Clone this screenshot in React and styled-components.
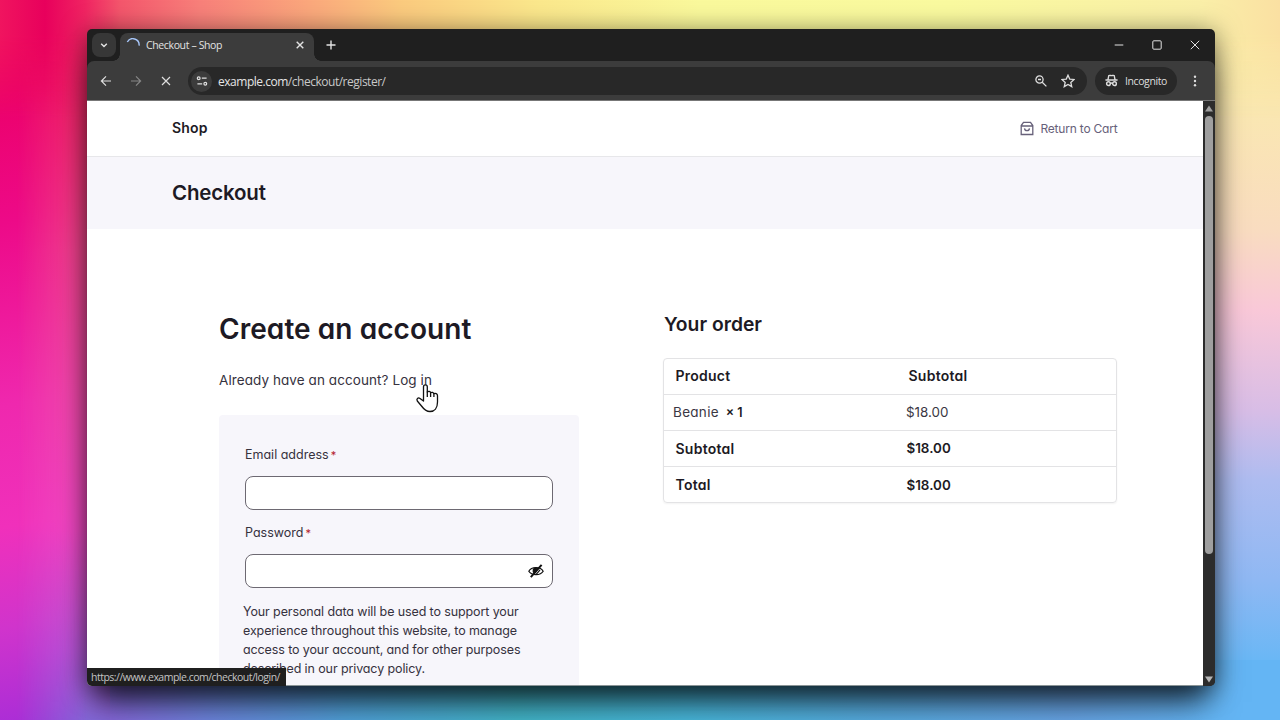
import React from "react";
import styled, { createGlobalStyle, css } from "styled-components";

const GlobalStyle = createGlobalStyle`
  * {
    box-sizing: border-box;
  }

  body {
    margin: 0;
    overflow: hidden;
  }

  h1, h2, p {
    margin: 0;
    font-weight: inherit;
  }
`;

const uiFont = css`
  font-family: "Open Sans", "Noto Sans", sans-serif;
`;

const Desktop = styled.div`
  position: relative;
  display: flex;
  width: 1280px;
  height: 720px;
  padding: 29px 65px 34px 87px;
  overflow: hidden;
  background: linear-gradient(
    #fbeea6 0,
    #fae8b0 100px,
    #f9dcc0 230px,
    #f9c8d8 310px,
    #d8bde6 410px,
    #aebcf0 480px,
    #8fb8f3 580px,
    #6ab7f5 660px,
    #64b5f4 720px
  );
`;

const TopGlow = styled.div`
  position: absolute;
  inset: 0 0 auto 0;
  height: 120px;
  background: linear-gradient(
    90deg,
    #f0145f 0,
    #e8005c 45px,
    #f02462 85px,
    #f4566c 120px,
    #f8807a 200px,
    #fba87c 310px,
    #fbca7e 400px,
    #fbe88c 540px,
    #faf99c 700px,
    #fafa9f 950px,
    #faefa8 1200px,
    #fae0a2 1280px
  );
  mask-image: linear-gradient(#000 28%, transparent);
`;

const LeftGlow = styled.div`
  position: absolute;
  inset: 0 auto 0 0;
  width: 110px;
  background: linear-gradient(
    170deg,
    #ec0a5e 0,
    #ec0068 80px,
    #ed0a88 220px,
    #ef28ae 400px,
    #f030bb 520px,
    #d034cc 620px,
    #a52cd8 730px
  );

  &::after {
    content: "";
    position: absolute;
    inset: 0;
    background: linear-gradient(
      #f01c60 0,
      #f0306c 120px,
      #f04a8c 250px,
      #f04eac 410px,
      #f04cc4 530px,
      #b45cd8 650px,
      #8468d8 720px
    );
    mask-image: linear-gradient(90deg, transparent 15%, #000 80%);
  }
`;

const BottomGlow = styled.div`
  position: absolute;
  inset: auto 0 0 87px;
  height: 60px;
  background: linear-gradient(
    90deg,
    #8c62da 0,
    #6f86e0 120px,
    #52a4dc 260px,
    #44b8cc 430px,
    #4abade 600px,
    #5aaee4 800px,
    #6aa8ea 980px,
    #64b5f4 1120px
  );
`;

const Window = styled.div`
  position: relative;
  display: flex;
  flex-direction: column;
  flex: 1;
  border-radius: 5px;
  overflow: hidden;
  background: #1f1f1f;
`;

const WindowShadow = styled.div`
  position: absolute;
  inset: 29px 65px 34px 87px;
  border-radius: 5px;
  box-shadow: 0 3px 26px rgba(0, 0, 0, 0.5), 0 24px 30px -8px rgba(0, 0, 0, 0.68);
`;

const TabStrip = styled.div`
  ${uiFont}
  display: flex;
  height: 32px;
  padding: 4px 0 0 5px;
  color: #e3e3e3;
`;

const TabSearch = styled.div`
  display: grid;
  place-items: center;
  width: 24px;
  height: 24px;
  border-radius: 8px;
  background: #373737;
`;

const Tab = styled.div`
  position: relative;
  display: flex;
  width: 194px;
  margin-left: 4px;
  padding: 0 8px 4px 6px;
  align-items: center;
  border-radius: 8px 8px 0 0;
  background: #3c3c3c;

  &::before,
  &::after {
    content: "";
    position: absolute;
    bottom: 0;
    width: 7px;
    height: 7px;
  }

  &::before {
    left: -7px;
    background: radial-gradient(circle at 0 0, transparent 6.5px, #3c3c3c 7px);
  }

  &::after {
    right: -7px;
    background: radial-gradient(circle at 100% 0, transparent 6.5px, #3c3c3c 7px);
  }
`;

const TabTitle = styled.span`
  flex: 1;
  padding-left: 6px;
  font-size: 10.5px;
  letter-spacing: -0.37px;
`;

const NewTab = styled.div`
  display: grid;
  place-items: center;
  width: 33px;
  height: 24px;
`;

const WindowControls = styled.div`
  display: flex;
  height: 24px;
  margin-left: auto;
  padding-right: 1px;
  align-items: center;

  svg {
    width: 38px;
  }
`;

const Toolbar = styled.div`
  ${uiFont}
  display: flex;
  flex: none;
  height: 40px;
  align-items: center;
  padding: 1px 0 0 4px;
  border-bottom: 1px solid #777;
  border-radius: 7px 7px 0 0;
  background: #3c3c3c;
  color: #dedede;
`;

const ToolButton = styled.div`
  display: grid;
  place-items: center;
  width: ${({ $width }) => $width || 30}px;
  height: 28px;
  color: ${({ $muted }) => ($muted ? "#868686" : "#dedede")};
`;

const Omnibox = styled.div`
  display: flex;
  width: 899px;
  height: 28px;
  margin-left: 7px;
  padding: 0 12px 0 3px;
  align-items: center;
  border-radius: 14px;
  background: #282828;
`;

const SiteInfo = styled.div`
  display: grid;
  place-items: center;
  width: 21px;
  height: 21px;
  margin-right: 6px;
  border-radius: 50%;
  background: #3c3c3c;
`;

const Url = styled.span`
  flex: 1;
  color: #c9c9c9;
  font-size: 12px;
  letter-spacing: -0.48px;

  b {
    color: #e6e6e6;
    font-weight: 400;
  }
`;

const Incognito = styled.div`
  display: flex;
  width: 82px;
  height: 28px;
  margin-left: 8px;
  padding: 0 0 1px 10px;
  gap: 7px;
  align-items: center;
  border-radius: 14px;
  background: #282828;
  font-size: 10.5px;
  font-weight: 500;
  letter-spacing: -0.4px;
`;

const Viewport = styled.div`
  display: flex;
  flex: 1;
  min-height: 0;
`;

const Page = styled.div`
  flex: 1;
  overflow: hidden;
  border-bottom: 1px solid #8a9496;
  background: #fff;
  color: #1d1a24;
  font-family: Inter, sans-serif;
  font-feature-settings: "cv11";
`;

const Scrollbar = styled.div`
  display: flex;
  flex-direction: column;
  width: 12px;
  align-items: center;
  justify-content: space-between;
  padding: 4px 0 3px;
  background: #2c2c2c;
`;

const Thumb = styled.div`
  width: 8px;
  height: 438px;
  margin: 4px 0 auto;
  border-radius: 4px;
  background: #9f9f9f;
`;

const SiteHeader = styled.header`
  display: flex;
  height: 56px;
  padding: 0 85.5px 0 85px;
  align-items: center;
  justify-content: space-between;
  border-bottom: 1px solid #e7e7ea;
`;

const Brand = styled.span`
  padding-bottom: 2px;
  font-size: 14px;
  font-weight: 600;
  letter-spacing: 0.2px;
`;

const CartLink = styled.a`
  display: flex;
  align-items: center;
  gap: 6px;
  color: #67617a;
  font-size: 12px;
  letter-spacing: -0.2px;
`;

const TitleBand = styled.div`
  height: 72px;
  padding-left: 85px;
  background: #f7f6fb;
  font-size: 20.5px;
  font-weight: 600;
  letter-spacing: -0.18px;
  line-height: 71px;
`;

const Columns = styled.main`
  display: grid;
  grid-template-columns: 360px 454px;
  column-gap: 84px;
  padding: 81px 0 0 132px;
`;

const Heading = styled.h1`
  font-size: 28px;
  font-weight: 600;
  letter-spacing: 0.06px;
  line-height: 38px;
`;

const LoginHint = styled.p`
  margin-top: 22px;
  font-size: 13.5px;
  letter-spacing: 0.08px;
  line-height: 20px;
  color: #36323e;
`;

const Form = styled.div`
  height: 300px;
  margin-top: 25px;
  padding: 30px 26px 0;
  border-radius: 4px;
  background: #f7f6fb;
`;

const Label = styled.div`
  height: 20px;
  line-height: 20px;
  font-size: 12.5px;
  color: #36323e;

  i {
    margin-left: 2px;
    color: #b3202a;
    font-size: 11px;
    font-style: normal;
  }
`;

const Field = styled.div`
  display: flex;
  height: 34px;
  margin: 11px 0 12.5px;
  padding-right: 8px;
  align-items: center;
  justify-content: flex-end;
  border: 1px solid #6d6972;
  border-radius: 8px;
  background: #fff;
`;

const Privacy = styled.p`
  margin: 14px -10px 0 -2px;
  font-size: 12.5px;
  letter-spacing: -0.11px;
  line-height: 19px;
  color: #36323e;
`;

const OrderTitle = styled.h2`
  padding: 1px 0 0 1px;
  font-size: 19.3px;
  font-weight: 600;
  line-height: 26px;
`;

const OrderTable = styled.div`
  margin-top: 21px;
  border: 1px solid #e3e3e5;
  border-radius: 4px;
  box-shadow: 0 1px 2px rgba(0, 0, 0, 0.05);
`;

const OrderRow = styled.div`
  display: grid;
  grid-template-columns: 233px 1fr;
  height: 36px;
  padding-left: ${({ $item }) => ($item ? 9 : 11.5)}px;
  line-height: 35px;
  font-size: ${({ $item }) => ($item ? 13.5 : 14)}px;
  font-weight: ${({ $item }) => ($item ? 400 : 600)};
  letter-spacing: ${({ $item }) => ($item ? 0 : 0.25)}px;
  color: ${({ $item }) => ($item ? "#3a3743" : "#1d1a24")};

  &:first-child {
    height: 35px;
    line-height: 34px;
  }

  &:last-child {
    line-height: 36px;
  }

  & + & {
    border-top: 1px solid #e3e3e5;
  }
`;

const ItemName = styled.span`
  letter-spacing: 0.3px;
`;

const Amount = styled.span`
  margin-left: ${({ $shift }) => $shift || 0}px;
  font-size: 13.4px;
  letter-spacing: 0;
`;

const Quantity = styled.b`
  margin-left: 3px;
  font-size: 12.5px;
  font-weight: 600;
  color: #1d1a24;
`;

const StatusBubble = styled.div`
  ${uiFont}
  position: absolute;
  left: 0;
  bottom: 0;
  width: 199px;
  height: 18px;
  padding-left: 4px;
  line-height: 18px;
  background: #1f1f1f;
  color: #c4c4c4;
  font-size: 10.5px;
  letter-spacing: -0.5px;
  white-space: nowrap;
`;

const Pointer = styled.svg`
  position: absolute;
  left: 415px;
  top: 383px;
`;

const Stroke = ({ size = 12, width = 1.4, children }) => (
  <svg
    width={size}
    height={size}
    viewBox="0 0 12 12"
    fill="none"
    stroke="currentColor"
    strokeWidth={width}
  >
    {children}
  </svg>
);

const Chrome = () => (
  <>
    <TabStrip>
      <TabSearch>
        <Stroke>
          <path d="M3.2 4.7 6 7.5l2.8-2.8" />
        </Stroke>
      </TabSearch>
      <Tab>
        <svg width="14" height="14" fill="none" stroke="#a8c7fa" strokeWidth="1.4">
          <path d="M1.300 4A6.300 6.300 0 0 1 13.100 7.600" />
        </svg>
        <TabTitle>Checkout – Shop</TabTitle>
        <Stroke>
          <path d="m2.7 2.7 6.6 6.6m0-6.6L2.7 9.3" />
        </Stroke>
      </Tab>
      <NewTab>
        <Stroke>
          <path d="M6 1.5v9M1.5 6h9" />
        </Stroke>
      </NewTab>
      <WindowControls>
        <Stroke width={1}>
          <path d="M1.7 6h8.6" />
        </Stroke>
        <Stroke width={1}>
          <rect x="1.8" y="1.8" width="8.4" height="8.4" rx="1" />
        </Stroke>
        <Stroke width={1}>
          <path d="m1.8 1.8 8.4 8.4m0-8.4L1.8 10.2" />
        </Stroke>
      </WindowControls>
    </TabStrip>
    <Toolbar>
      <ToolButton>
        <Stroke width={1.2}>
          <path d="M11 6H1.7M6 1.4 1.4 6 6 10.6" />
        </Stroke>
      </ToolButton>
      <ToolButton $muted>
        <Stroke width={1.2}>
          <path d="M1 6h9.3M6 1.4 10.6 6 6 10.6" />
        </Stroke>
      </ToolButton>
      <ToolButton>
        <Stroke width={1.2}>
          <path d="m2 2 8 8m0-8-8 8" />
        </Stroke>
      </ToolButton>
      <Omnibox>
        <SiteInfo>
          <Stroke width={1.2}>
            <circle cx="2.7" cy="3.2" r="1.4" />
            <path d="M5.8 3.2h4.8M1.4 8.8h4.8" />
            <circle cx="9.3" cy="8.8" r="1.4" />
          </Stroke>
        </SiteInfo>
        <Url>
          <b>example.com</b>/checkout/register/
        </Url>
        <ToolButton $width={40}>
          <Stroke width={1.3}>
            <circle cx="4.5" cy="4.5" r="3.6" />
            <path d="m7.2 7.2 4.2 4.2M3 4.5h3" />
          </Stroke>
        </ToolButton>
        <Stroke size={14} width={1.1}>
          <path d="M6 1l1.5 3.4 3.7.3-2.8 2.5.8 3.6L6 8.9l-3.2 1.9.8-3.6L.8 4.7l3.7-.3z" />
        </Stroke>
      </Omnibox>
      <Incognito>
        <Stroke size={13} width={1.3}>
          <path d="M.4 5.6h11.2M2.7 5.4l.8-3.9c.9-.5 1.6 0 2.5 0s1.6-.5 2.5 0l.8 3.9M5 8.7c.6-.4 1.4-.4 2 0" />
          <circle cx="3.2" cy="8.9" r="1.7" />
          <circle cx="8.8" cy="8.9" r="1.7" />
        </Stroke>
        <span>Incognito</span>
      </Incognito>
      <ToolButton $width={36}>
        <svg width="4" height="12" fill="currentColor">
          <circle cx="2" cy="1.7" r="1.2" />
          <circle cx="2" cy="6" r="1.2" />
          <circle cx="2" cy="10.3" r="1.2" />
        </svg>
      </ToolButton>
    </Toolbar>
  </>
);

const Checkout = () => (
  <Page>
    <SiteHeader>
      <Brand>Shop</Brand>
      <CartLink>
        <svg width="14" height="15" viewBox="0 0 14 15" fill="none" stroke="currentColor" strokeWidth="1.3">
          <path d="M3.5 1.3h7l2.3 3.2v9H1.200v-9zM1.200 5h11.600M4.500 7.300c.4 3.200 4.600 3.200 5 0" />
        </svg>
        Return to Cart
      </CartLink>
    </SiteHeader>
    <TitleBand>Checkout</TitleBand>
    <Columns>
      <div>
        <Heading>Create an account</Heading>
        <LoginHint>Already have an account? Log in</LoginHint>
        <Form>
          <Label>
            Email address<i>*</i>
          </Label>
          <Field />
          <Label>
            Password<i>*</i>
          </Label>
          <Field>
            <svg width="16" height="16" viewBox="0 0 16 16" fill="none" stroke="#111" strokeWidth="1.2">
              <path d="M.8 8.3C3.5 3.2 12.5 3.2 15.2 8.3 12.5 12.8 3.5 12.8.8 8.3z" />
              <path d="M5.3 6.5c-.6 2 .2 3 1.2 3.8L10 5.8c-1.5-1.3-4-.9-4.7.7z" fill="#111" />
              <path d="M2.8 14.200 13.600 1.800" strokeWidth="2" />
              <path d="M8.200 11.300 12 6.800" />
            </svg>
          </Field>
          <Privacy>
            Your personal data will be used to support your
            <br />
            experience throughout this website, to manage
            <br />
            access to your account, and for other purposes
            <br />
            described in our privacy policy.
          </Privacy>
        </Form>
      </div>
      <div>
        <OrderTitle>Your order</OrderTitle>
        <OrderTable>
          <OrderRow>
            <span>Product</span>
            <span>Subtotal</span>
          </OrderRow>
          <OrderRow $item>
            <span>
              <ItemName>Beanie</ItemName> <Quantity>× 1</Quantity>
            </span>
            <Amount>$18.00</Amount>
          </OrderRow>
          <OrderRow>
            <span>Subtotal</span>
            <Amount $shift={-2}>$18.00</Amount>
          </OrderRow>
          <OrderRow>
            <span>Total</span>
            <Amount $shift={-2}>$18.00</Amount>
          </OrderRow>
        </OrderTable>
      </div>
    </Columns>
  </Page>
);

const App = () => (
  <Desktop>
    <GlobalStyle />
    <BottomGlow />
    <LeftGlow />
    <TopGlow />
    <WindowShadow />
    <Window>
      <Chrome />
      <Viewport>
        <Checkout />
        <Scrollbar>
          <svg width="8" height="7" fill="#9f9f9f">
            <path d="M4 .5 8 6.5H0z" />
          </svg>
          <Thumb />
          <svg width="8" height="7" fill="#b5b5b5">
            <path d="M0 .5h8L4 6.5z" />
          </svg>
        </Scrollbar>
      </Viewport>
      <StatusBubble>https://www.example.com/checkout/login/</StatusBubble>
    </Window>
    <Pointer
      width="25"
      height="31"
      viewBox="0 0 25 31"
      fill="#fff"
      stroke="#111"
      strokeWidth="1.3"
      strokeLinejoin="round"
    >
      <path d="M8.5 18V3.8c0-2.6 3.8-2.6 3.8 0V9c1-1 3-.8 3.3.7 1.2-.8 2.8-.3 3.2 1 1.5-.7 3.7 0 3.7 2V19c0 6-3 9.5-7.5 9.5-4 0-6-2-8.500-5.500L2.300 18c-1.200-2 .8-4 2.700-2.600z" />
      <path d="M12.300 8.500v5.500M15.600 9.700V14M18.900 10.700V14" />
    </Pointer>
  </Desktop>
);

export default App;
